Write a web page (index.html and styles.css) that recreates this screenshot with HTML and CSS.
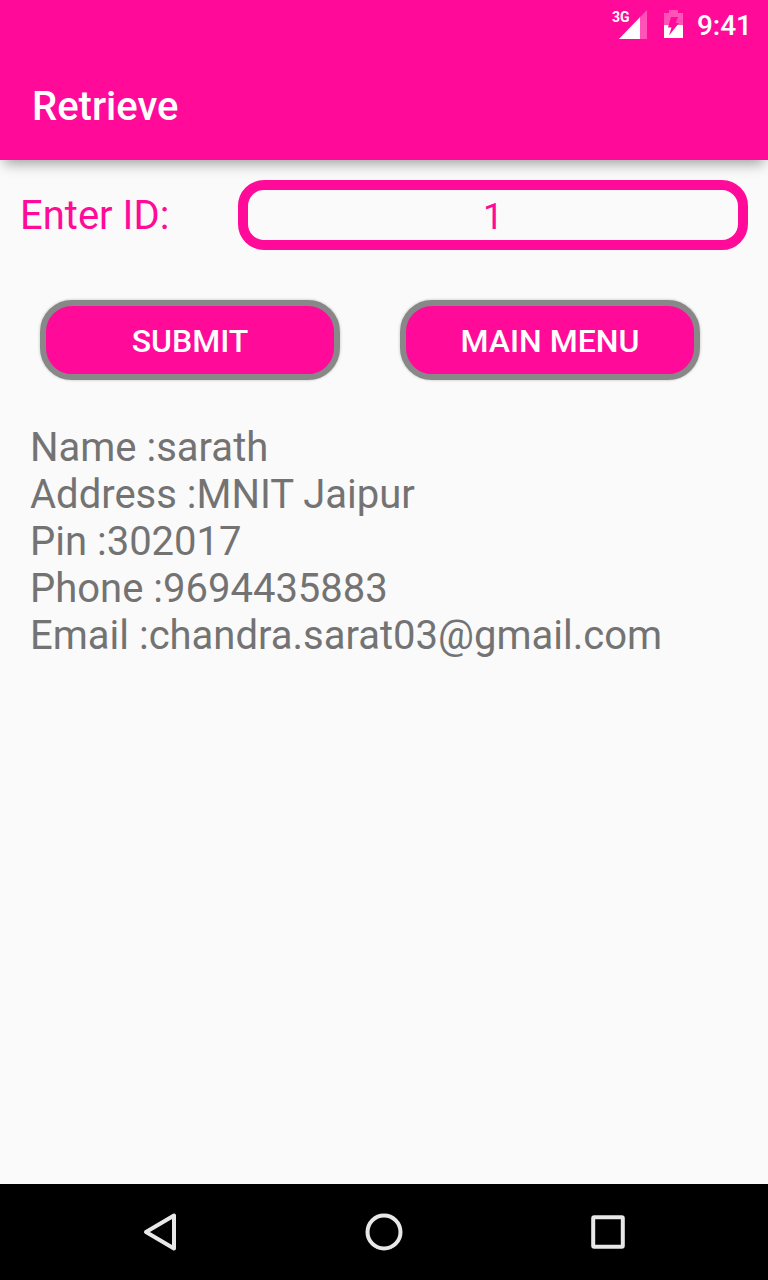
FILE: index.html
```html
<!DOCTYPE html>
<html lang="en">
<head>
<meta charset="utf-8">
<meta name="viewport" content="width=device-width, initial-scale=1">
<title>Retrieve</title>
<link rel="stylesheet" href="styles.css">
</head>
<body>
<div class="screen">
  <header class="top">
    <div class="status">
      <div class="signal">
        <span class="network">3G</span>
        <svg width="28" height="29" viewBox="0 0 28 29" aria-hidden="true">
          <path d="M28 0V29H0Z" fill="#fff" fill-opacity=".3"/>
          <path d="M21 7.3V29H0Z" fill="#fff"/>
        </svg>
      </div>
      <svg class="battery" width="19" height="29" viewBox="0 0 19 29" aria-hidden="true">
        <path d="M5 0H14V3H19V15H0V3H5Z" fill="#fff" fill-opacity=".3"/>
        <path d="M0 15H19V28H0Z" fill="#fff"/>
        <path class="bolt" d="M7 7H14L11.5 13H15L5 25.5L7.5 17.5H4Z"/>
      </svg>
      <time class="clock">9:41</time>
    </div>
    <h1 class="title">Retrieve</h1>
  </header>
  <main class="content">
    <form class="form" onsubmit="return false">
      <div class="field">
        <label class="label" for="record-id">Enter ID:</label>
        <input class="input" id="record-id" type="text" inputmode="numeric" value="1">
      </div>
      <div class="actions">
        <button class="button" type="submit">SUBMIT</button>
        <button class="button" type="button">MAIN MENU</button>
      </div>
    </form>
    <div class="record">
      <p>Name :sarath</p>
      <p>Address :MNIT Jaipur</p>
      <p>Pin :302017</p>
      <p>Phone :9694435883</p>
      <p>Email :chandra.sarat03@gmail.com</p>
    </div>
  </main>
  <nav class="nav" aria-label="System">
    <button class="nav-button" type="button" aria-label="Back">
      <svg width="40" height="40" viewBox="0 0 40 40"><path d="M34 3.5V36.5L6 20Z"/></svg>
    </button>
    <button class="nav-button" type="button" aria-label="Home">
      <svg width="40" height="40" viewBox="0 0 40 40"><circle cx="20" cy="20" r="16.5"/></svg>
    </button>
    <button class="nav-button" type="button" aria-label="Recent apps">
      <svg width="40" height="40" viewBox="0 0 40 40"><rect x="5.2" y="5.2" width="29.6" height="29.6" rx="1"/></svg>
    </button>
  </nav>
</div>
</body>
</html>
```
FILE: styles.css
```css
:root {
  --pink: #ff0a99;
  --page: #fafafa;
}

* {
  box-sizing: border-box;
}

body {
  margin: 0;
  background: var(--page);
  font-family: Roboto, "Liberation Sans", sans-serif;
}

.screen {
  display: flex;
  flex-direction: column;
  min-height: 100vh;
}

.top {
  background: var(--pink);
  color: #fff;
  box-shadow: 0 8px 12px -4px rgba(0, 0, 0, 0.35);
}

.status {
  display: flex;
  align-items: center;
  justify-content: flex-end;
  height: 48px;
  padding-right: 16px;
}

.signal {
  position: relative;
  height: 29px;
  margin-right: 17px;
}

.signal svg,
.battery {
  display: block;
}

.bolt {
  fill: var(--pink);
}

.network {
  position: absolute;
  top: -1px;
  left: -7px;
  font-size: 14px;
  line-height: 16px;
  font-weight: 700;
}

.clock {
  margin-left: 14px;
  padding-top: 4px;
  font-size: 28px;
  line-height: 44px;
  font-weight: 500;
}

.title {
  margin: 0;
  padding: 6px 32px 0;
  font-size: 40px;
  line-height: 106px;
  font-weight: 500;
}

.content {
  flex: 1;
  padding: 20px 20px 40px;
}

.field {
  display: flex;
  align-items: center;
}

.label {
  flex: none;
  width: 218px;
  color: var(--pink);
  font-size: 40px;
  line-height: 47px;
}

.input {
  flex: 1;
  min-width: 0;
  height: 70px;
  padding: 4px 0 0;
  border: 10px solid var(--pink);
  border-radius: 26px;
  outline: none;
  background: transparent;
  color: var(--pink);
  font: inherit;
  font-size: 36px;
  text-align: center;
}

.actions {
  display: grid;
  grid-template-columns: 1fr 1fr;
  gap: 60px;
  padding: 50px 48px 0 20px;
}

.button {
  height: 80px;
  padding: 2px 0 0;
  border: 6px solid #888;
  border-radius: 32px;
  background: var(--pink);
  box-shadow: 0 0 3px rgba(0, 0, 0, 0.25);
  color: #fff;
  font: inherit;
  font-size: 32px;
  font-weight: 500;
}

.record {
  padding: 44px 10px 0;
  color: #737373;
  font-size: 40px;
  line-height: 47px;
}

.record p {
  margin: 0;
}

.nav {
  display: flex;
  height: 96px;
  padding: 0 48px;
  background: #000;
}

.nav-button {
  display: flex;
  flex: 1;
  align-items: center;
  justify-content: center;
  padding: 0;
  border: 0;
  background: none;
}

.nav-button svg {
  fill: none;
  stroke: #e8e8e8;
  stroke-width: 4;
  stroke-linejoin: round;
}
```
